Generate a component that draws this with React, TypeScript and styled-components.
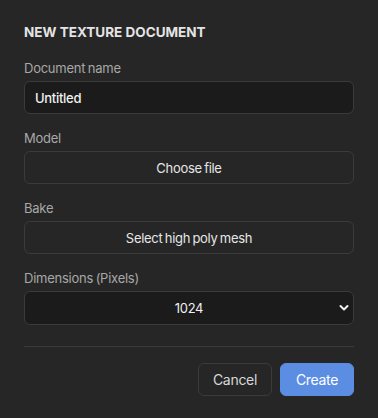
import React from "react";
import styled, { createGlobalStyle } from "styled-components";

const Global = createGlobalStyle`
  html, body { margin: 0; padding: 0; background: #262626; }
  body { font-family: Inter, "Noto Sans", sans-serif; color: #e6e6e6; }
  * { box-sizing: border-box; }
`;

const Panel = styled.div`
  width: 378px;
  height: 418px;
  background: #262626;
  padding: 24px;
  display: flex;
  flex-direction: column;
`;

const Title = styled.h2`
  margin: 0 0 20px;
  font-size: 13.5px;
  line-height: 16px;
  font-weight: 700;
  color: #e4e4e4;
`;

const Fields = styled.div`
  display: flex;
  flex-direction: column;
  gap: 16px;
`;

const Field = styled.label`
  display: flex;
  flex-direction: column;
  gap: 5px;
`;

const Label = styled.span`
  font-size: 13px;
  line-height: 16px;
  color: #a8a8a8;
  letter-spacing: -0.25px;
  word-spacing: -0.8px;
`;

const controlFont = `
  font-family: Inter, "Noto Sans", sans-serif;
  font-size: 13px;
  font-weight: 400;
  letter-spacing: -0.3px;
  word-spacing: -1px;
`;

const TextInput = styled.input`
  ${controlFont}
  font-weight: 500;
  height: 33px;
  border: 1px solid #3b3b3b;
  border-radius: 6px;
  background: #1b1b1b;
  color: #f0f0f0;
  padding: 0 10px;
  outline: none;
`;

const FileButton = styled.button`
  ${controlFont}
  height: 33px;
  border: 1px solid #3b3b3b;
  border-radius: 6px;
  background: #262626;
  color: #e6e6e6;
  cursor: pointer;
`;

const SelectWrap = styled.div`
  position: relative;
  display: flex;
`;

const Select = styled.select`
  ${controlFont}
  flex: 1;
  height: 34px;
  appearance: none;
  border: 1px solid #3b3b3b;
  border-radius: 6px;
  background: #1b1b1b;
  color: #f0f0f0;
  text-align: center;
  text-align-last: center;
  padding: 0 24px;
  outline: none;
`;

const Chevron = styled.svg`
  position: absolute;
  right: 5px;
  top: 13px;
  pointer-events: none;
`;

const Divider = styled.hr`
  margin: 21px 0 16px;
  border: 0;
  border-top: 1px solid #3a3a3a;
`;

const Actions = styled.div`
  display: flex;
  justify-content: flex-end;
  gap: 8px;
`;

const ActionButton = styled.button<{ $primary?: boolean }>`
  ${controlFont}
  font-size: 14px;
  width: 74px;
  height: 33px;
  border-radius: 6px;
  border: 1px solid ${(p) => (p.$primary ? "#5b8ee2" : "#3b3b3b")};
  background: ${(p) => (p.$primary ? "#5b8ee2" : "#262626")};
  color: ${(p) => (p.$primary ? "#ffffff" : "#d8d8d8")};
  cursor: pointer;
`;

export default function App() {
  return (
    <>
      <Global />
      <Panel>
        <Title>NEW TEXTURE DOCUMENT</Title>
        <Fields>
          <Field>
            <Label>Document name</Label>
            <TextInput defaultValue="Untitled" />
          </Field>
          <Field as="div">
            <Label>Model</Label>
            <FileButton>Choose file</FileButton>
          </Field>
          <Field as="div">
            <Label>Bake</Label>
            <FileButton>Select high poly mesh</FileButton>
          </Field>
          <Field>
            <Label>Dimensions (Pixels)</Label>
            <SelectWrap>
              <Select defaultValue="1024">
                <option>512</option>
                <option>1024</option>
                <option>2048</option>
                <option>4096</option>
              </Select>
              <Chevron width="10" height="8" viewBox="0 0 10 8">
                <path d="M1.5 2 L5 5.5 L8.5 2" fill="none" stroke="#f0f0f0" strokeWidth="2" strokeLinecap="round" strokeLinejoin="round" />
              </Chevron>
            </SelectWrap>
          </Field>
        </Fields>
        <Divider />
        <Actions>
          <ActionButton>Cancel</ActionButton>
          <ActionButton $primary>Create</ActionButton>
        </Actions>
      </Panel>
    </>
  );
}
